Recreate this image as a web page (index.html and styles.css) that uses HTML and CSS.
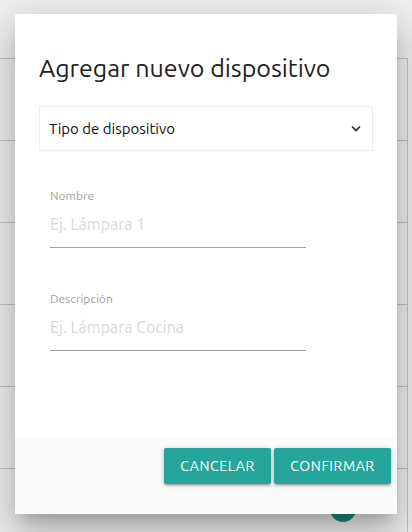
FILE: index.html
```html
<!DOCTYPE html>
<html lang="es">
<head>
<meta charset="utf-8">
<title>Agregar nuevo dispositivo</title>
<link rel="stylesheet" href="styles.css">
</head>
<body>
<div class="page">
  <div class="list">
    <div class="row"></div>
    <div class="row"></div>
    <div class="row"></div>
    <div class="row"></div>
    <div class="row"></div>
    <div class="row"></div>
    <div class="row"></div>
  </div>
  <div class="fab"></div>
</div>
<div class="overlay"></div>
<div class="modal">
  <div class="modal-content">
    <h4 class="title">Agregar nuevo dispositivo</h4>
    <div class="select">
      <span>Tipo de dispositivo</span>
      <svg class="caret" width="10" height="7" viewBox="0 0 10 7"><path d="M1 1.5 L5 5.5 L9 1.5" fill="none" stroke="#222" stroke-width="1.6"/></svg>
    </div>
    <div class="field">
      <label class="label">Nombre</label>
      <div class="input">Ej. Lámpara 1</div>
    </div>
    <div class="field">
      <label class="label">Descripción</label>
      <div class="input">Ej. Lámpara Cocina</div>
    </div>
  </div>
  <div class="modal-footer">
    <button class="btn btn-cancel">CANCELAR</button>
    <button class="btn btn-confirm">CONFIRMAR</button>
  </div>
</div>
</body>
</html>
```
FILE: styles.css
```css
* { box-sizing: border-box; }
html, body { margin: 0; padding: 0; }
body {
  width: 412px;
  height: 532px;
  overflow: hidden;
  background: #ffffff;
  font-family: "Ubuntu", "Lato", "Noto Sans", sans-serif;
  position: relative;
}
.page {
  height: 532px;
  padding-top: 58px;
}
.list {
  width: 408px;
  border-right: 1px solid #d0d0d0;
  height: 474px;
  overflow: hidden;
}
.row {
  height: 82px;
  border-top: 1px solid #d0d0d0;
}
.fab {
  position: absolute;
  left: 330px;
  top: 496px;
  width: 26px;
  height: 26px;
  border-radius: 50%;
  background: #23958b;
}
.overlay {
  position: absolute;
  inset: 0;
  background: rgba(0, 0, 0, 0.06);
}
.modal {
  position: absolute;
  left: 15px;
  top: 14px;
  width: 382px;
  height: 500px;
  background: #ffffff;
  border-radius: 2px;
  display: flex;
  flex-direction: column;
  box-shadow: 0 24px 38px 3px rgba(0,0,0,0.14), 0 9px 46px 8px rgba(0,0,0,0.12), 0 11px 15px -7px rgba(0,0,0,0.2);
}
.modal-content {
  flex: 1;
  padding: 24px 24px 0 24px;
}
.title {
  margin: 14px 0 0 0;
  font-size: 25px;
  font-weight: 400;
  color: #222;
  line-height: 32px;
}
.select {
  margin-top: 22px;
  height: 45px;
  border: 1px solid #eeeeee;
  display: flex;
  align-items: center;
  justify-content: space-between;
  padding: 0 11px 0 9px;
  font-size: 15px;
  color: #111;
}
.caret { display: block; }
.field {
  width: 256px;
  margin-left: 11px;
}
.select + .field { margin-top: 37px; }
.field + .field { margin-top: 43px; }
.label {
  display: block;
  font-size: 12px;
  color: #9e9e9e;
  line-height: 16px;
}
.input {
  margin-top: 8px;
  height: 36px;
  border-bottom: 1px solid #9e9e9e;
  font-size: 16px;
  color: #dadada;
  line-height: 24px;
}
.modal-footer {
  height: 76px;
  background: #fafafa;
  display: flex;
  justify-content: flex-end;
  align-items: flex-start;
  gap: 3px;
  padding: 10px 6px 0 0;
}
.btn {
  height: 36px;
  border: none;
  border-radius: 2px;
  background: #26a69a;
  color: #ffffff;
  font-family: "Ubuntu", "Lato", "Noto Sans", sans-serif;
  font-size: 14px;
  letter-spacing: 0.6px;
  padding: 0;
  box-shadow: 0 2px 2px 0 rgba(0,0,0,0.14), 0 3px 1px -2px rgba(0,0,0,0.12), 0 1px 5px 0 rgba(0,0,0,0.2);
}
.btn-cancel { width: 107px; }
.btn-confirm { width: 117px; }
```
